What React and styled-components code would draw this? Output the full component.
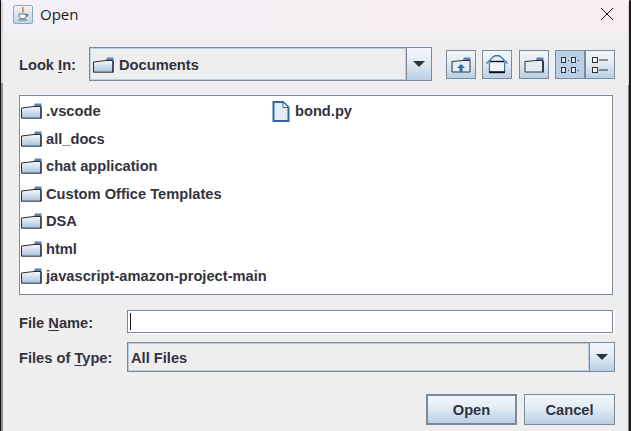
import React from "react";
import styled, { createGlobalStyle } from "styled-components";

const Global = createGlobalStyle`
  html, body { margin: 0; padding: 0; background: #eeeeee; }
  body { width: 631px; height: 431px; overflow: hidden; font-family: "Liberation Sans", Arial, sans-serif; }
`;
const Dialog = styled.div`
  width: 631px; height: 431px; display: flex; flex-direction: column; background: #eeeeee; position: relative; overflow: hidden;
`;
const LeftEdge = styled.div`
  position: absolute; left: 0; top: 0; bottom: 0; width: 3px;
  background:
    linear-gradient(to right, #111 0 1.5px, #d6d6d8 1.5px 3px) top / 3px 83px no-repeat,
    linear-gradient(to right, #111 0 1.5px, #8a9097 1.5px 3px);
  border-top-right-radius: 6px;
`;
const RightEdge = styled.div`
  position: absolute; right: 0; top: 0; bottom: 0; width: 3px;
  background:
    linear-gradient(to right, #d6d6d8 0 1px, #1c1c1c 1px 3px) top / 3px 85px no-repeat,
    linear-gradient(to right, #7d838a 0 1px, #1c1c1c 1px 3px);
  border-top-left-radius: 6px;
`;
const TitleBar = styled.div`
  height: 33px; flex: none; background: linear-gradient(to right, #f3f0f7, #f9eef1); display: flex; align-items: center; padding: 0 0 5px 13px; box-sizing: border-box;
`;
const AppIcon = styled.div`
  width: 20px; height: 19px; box-sizing: border-box; border: 1px solid #8fa5b8; border-radius: 2px;
  background: linear-gradient(#eef3f8, #c5d6e6); display: flex; align-items: center; justify-content: center;
`;
const TitleText = styled.span`
  font: 15px "Open Sans", sans-serif; color: #1a1a1a; margin-left: 7px; flex: 1;
`;
const CloseBox = styled.div`
  width: 46px; height: 28px; margin-right: 1px; display: flex; align-items: center; justify-content: center; box-sizing: border-box;
`;
const Body = styled.div`
  flex: 1; display: flex; flex-direction: column; padding: 14px 16px 6px 19px;
`;
const TopRow = styled.div`
  display: flex; align-items: center; height: 34px;
`;
const Label = styled.label`
  font-size: 14.67px; font-weight: 700; color: #333340; width: ${p => p.$w}px; flex: none; padding-top: ${p => p.$pt ?? 1}px;
  u { text-underline-offset: 2px; }
`;
const Combo = styled.div`
  display: flex; height: ${p => p.$h}px; width: ${p => p.$w}px; flex: none; box-sizing: border-box; border: 1px solid #7a8a99;
  background: #eeeeee; align-items: stretch;
`;
const ComboValue = styled.div`
  flex: 1; display: flex; align-items: center; gap: 5px; padding: 1px 0 0 ${p => p.$pl}px; border: 1px solid #b8cfe5;
  font-size: 14.67px; font-weight: 700; color: #333340;
`;
const ArrowButton = styled.div`
  width: ${p => p.$w}px; flex: none; border-left: 1px solid #7a8a99; background: linear-gradient(#f3f7fb, #e2ebf4 45%, #b9cfe4);
  display: flex; align-items: center; justify-content: center;
`;
const Arrow = styled.div`
  width: 0; height: 0; border-left: 6px solid transparent; border-right: 6px solid transparent; border-top: 6px solid #333;
`;
const Tools = styled.div`
  margin-left: 14px; display: flex; height: 29px; margin-top: 1px;
`;
const ToolButton = styled.div`
  width: 30px; height: 29px; box-sizing: border-box; border: 1px solid #7a8a99; margin-right: ${p => p.$mr ?? 6}px; flex: none;
  display: flex; align-items: center; justify-content: center;
  background: ${p => p.$active ? "#b8cfe5" : "linear-gradient(#f3f7fb, #e2ebf4 45%, #b9cfe4)"};
`;
const FileList = styled.div`
  margin-top: 14px; height: 200px; width: 594px; box-sizing: border-box; border: 1px solid #7a8a99; background: #fff;
  display: flex; padding: 1.5px 0 0 1px;
`;
const FileColumn = styled.div`
  width: ${p => p.$w}px; flex: none; display: flex; flex-direction: column;
`;
const FileRow = styled.div`
  height: 27.5px; display: flex; align-items: center; gap: ${p => p.$gap ?? 4}px; font-size: 14.67px; font-weight: 700; color: #333340;
`;
const NameRow = styled.div`
  display: flex; align-items: center; margin-top: 15px; height: 23px;
`;
const NameInput = styled.div`
  width: 486px; height: 23px; box-sizing: border-box; border: 1px solid #7a8a99; background: #fff; padding: 2px 0 2px 2px; flex: none;
  box-shadow: 2px 1px 0 #fff;
`;
const Caret = styled.div`
  width: 1px; height: 100%; background: #111;
`;
const TypeRow = styled.div`
  display: flex; align-items: center; margin-top: 9px;
`;
const Actions = styled.div`
  display: flex; justify-content: flex-end; gap: 7px; margin-top: 22px;
`;
const ActionButton = styled.button`
  width: 91px; height: 31px; box-sizing: border-box; padding: 0; border: ${p => p.$def ? 2 : 1}px solid #7a8a99;
  background: linear-gradient(#f3f7fb, #e2ebf4 45%, #b9cfe4); font: 700 14.67px "Liberation Sans", Arial, sans-serif; color: #333340;
`;

const Folder = () => (
  <svg width="21" height="16" viewBox="0 0 21 16">
    <defs>
      <linearGradient id="fg" x1="0" y1="0" x2="0" y2="1">
        <stop offset="0" stopColor="#f6f8fb" />
        <stop offset="1" stopColor="#a6c1dc" />
      </linearGradient>
    </defs>
    <path d="M13 3 L14 0.5 H20.5 V3.5 Z" fill="#5a7fb8" />
    <path d="M0.5 5 L13 3.5 H20 V15.2 H0.5 Z" fill="url(#fg)" stroke="#2b2b33" />
    <path d="M20 4 V15.5" stroke="#2b2b33" strokeWidth="1.2" />
  </svg>
);
const FileGlyph = () => (
  <svg width="18" height="21" viewBox="0 0 18 21">
    <path d="M1.5 1 H11 L16.5 6.5 V20 H1.5 Z" fill="#e4ecf6" stroke="#336699" strokeWidth="2" />
    <path d="M11 1 L16.5 6.5 M11 1 V6.5 H16.5" fill="#fff" stroke="#336699" />
  </svg>
);
const Java = () => (
  <svg width="16" height="16" viewBox="0 0 16 16">
    <path d="M8 1 C6 3 10 4 7.5 6.5" stroke="#d9772a" strokeWidth="1.5" fill="none" />
    <path d="M4 8 H11 V10 C11 12 9.5 12.5 7.5 12.5 C5.5 12.5 4 12 4 10 Z" fill="#fff" stroke="#55708f" />
    <path d="M11 8.5 H13 V10 H11" fill="none" stroke="#55708f" />
    <path d="M3 14 H12" stroke="#55708f" />
  </svg>
);
const UpIcon = () => (
  <svg width="20" height="16" viewBox="0 0 20 16">
    <path d="M12 3 L13 0.5 H19.5 V3.5 Z" fill="#5a7fb8" />
    <path d="M1 4.5 L12 3.5 H19 V15 H1 Z" fill="#e4ecf5" stroke="#333" />
    <path d="M10 7 L14 11 H11.5 V15 H8.5 V11 H6 Z" fill="#2f6fad" />
  </svg>
);
const HomeIcon = () => (
  <svg width="22" height="19" viewBox="0 0 22 19">
    <path d="M0.5 8.5 L7 2 L9 0.8 H13 L15 2 L21.5 8.5" fill="none" stroke="#3a74ad" strokeWidth="1.4" />
    <path d="M3.5 7 V17 M18.5 7 V17" stroke="#3a74ad" strokeWidth="1.4" />
    <rect x="4" y="6" width="14" height="11" fill="#eef3f8" />
    <path d="M4 6.5 H18" stroke="#111" strokeWidth="1.4" />
    <path d="M3 17.2 H19" stroke="#111" strokeWidth="2" />
  </svg>
);
const NewIcon = () => (
  <svg width="20" height="16" viewBox="0 0 20 16">
    <path d="M12 3 L13 0.5 H19.5 V3.5 Z" fill="#5a7fb8" />
    <path d="M1 4.5 L12 3.5 H19 V15 H1 Z" fill="#e4ecf5" stroke="#333" />
    <path d="M19 4 V15.5" stroke="#222" strokeWidth="1.5" />
  </svg>
);
const ListIcon = () => (
  <svg width="18" height="16" viewBox="0 0 18 16">
    <g fill="#f2f6fa" stroke="#333">
      <rect x="1.5" y="0.5" width="5" height="5" /><rect x="1.5" y="10.5" width="5" height="5" />
      <path d="M8 3 H17 M8 13 H17" />
    </g>
  </svg>
);
const GridIcon = () => (
  <svg width="20" height="16" viewBox="0 0 20 16">
    <g fill="#dbe6f1" stroke="#333">
      <rect x="1.5" y="0.5" width="4" height="5" /><rect x="11.5" y="0.5" width="4" height="5" />
      <rect x="1.5" y="10.5" width="4" height="5" /><rect x="11.5" y="10.5" width="4" height="5" />
      <path d="M8 3.5 H9 M18 3.5 H19 M8 13.5 H9 M18 13.5 H19" />
    </g>
  </svg>
);
const CloseIcon = () => (
  <svg width="14" height="14" viewBox="0 0 14 14"><path d="M1 1 L13 13 M13 1 L1 13" stroke="#111" strokeWidth="1" /></svg>
);

const folders = [".vscode", "all_docs", "chat application", "Custom Office Templates", "DSA", "html", "javascript-amazon-project-main"];

export default function App() {
  return (
    <Dialog>
      <Global />
      <TitleBar>
        <AppIcon><Java /></AppIcon>
        <TitleText>Open</TitleText>
        <CloseBox><CloseIcon /></CloseBox>
      </TitleBar>
      <Body>
        <TopRow>
          <Label $w={70}>Look <u>I</u>n:</Label>
          <Combo $w={343} $h={34}>
            <ComboValue $pl={2}><Folder />Documents</ComboValue>
            <ArrowButton $w={24}><Arrow /></ArrowButton>
          </Combo>
          <Tools>
            <ToolButton><UpIcon /></ToolButton>
            <ToolButton $mr={7}><HomeIcon /></ToolButton>
            <ToolButton><NewIcon /></ToolButton>
            <ToolButton $active $mr={0}><GridIcon /></ToolButton>
            <ToolButton $mr={0}><ListIcon /></ToolButton>
          </Tools>
        </TopRow>
        <FileList>
          <FileColumn $w={251}>
            {folders.map(f => <FileRow key={f}><Folder />{f}</FileRow>)}
          </FileColumn>
          <FileColumn $w={200}>
            <FileRow $gap={5}><FileGlyph />bond.py</FileRow>
          </FileColumn>
        </FileList>
        <NameRow>
          <Label $w={108} $pt={3}>File <u>N</u>ame:</Label>
          <NameInput><Caret /></NameInput>
        </NameRow>
        <TypeRow>
          <Label $w={108}>Files of <u>T</u>ype:</Label>
          <Combo $w={488} $h={30}>
            <ComboValue $pl={2}>All Files</ComboValue>
            <ArrowButton $w={24}><Arrow /></ArrowButton>
          </Combo>
        </TypeRow>
        <Actions>
          <ActionButton $def>Open</ActionButton>
          <ActionButton>Cancel</ActionButton>
        </Actions>
      </Body>
      <LeftEdge />
      <RightEdge />
    </Dialog>
  );
}
